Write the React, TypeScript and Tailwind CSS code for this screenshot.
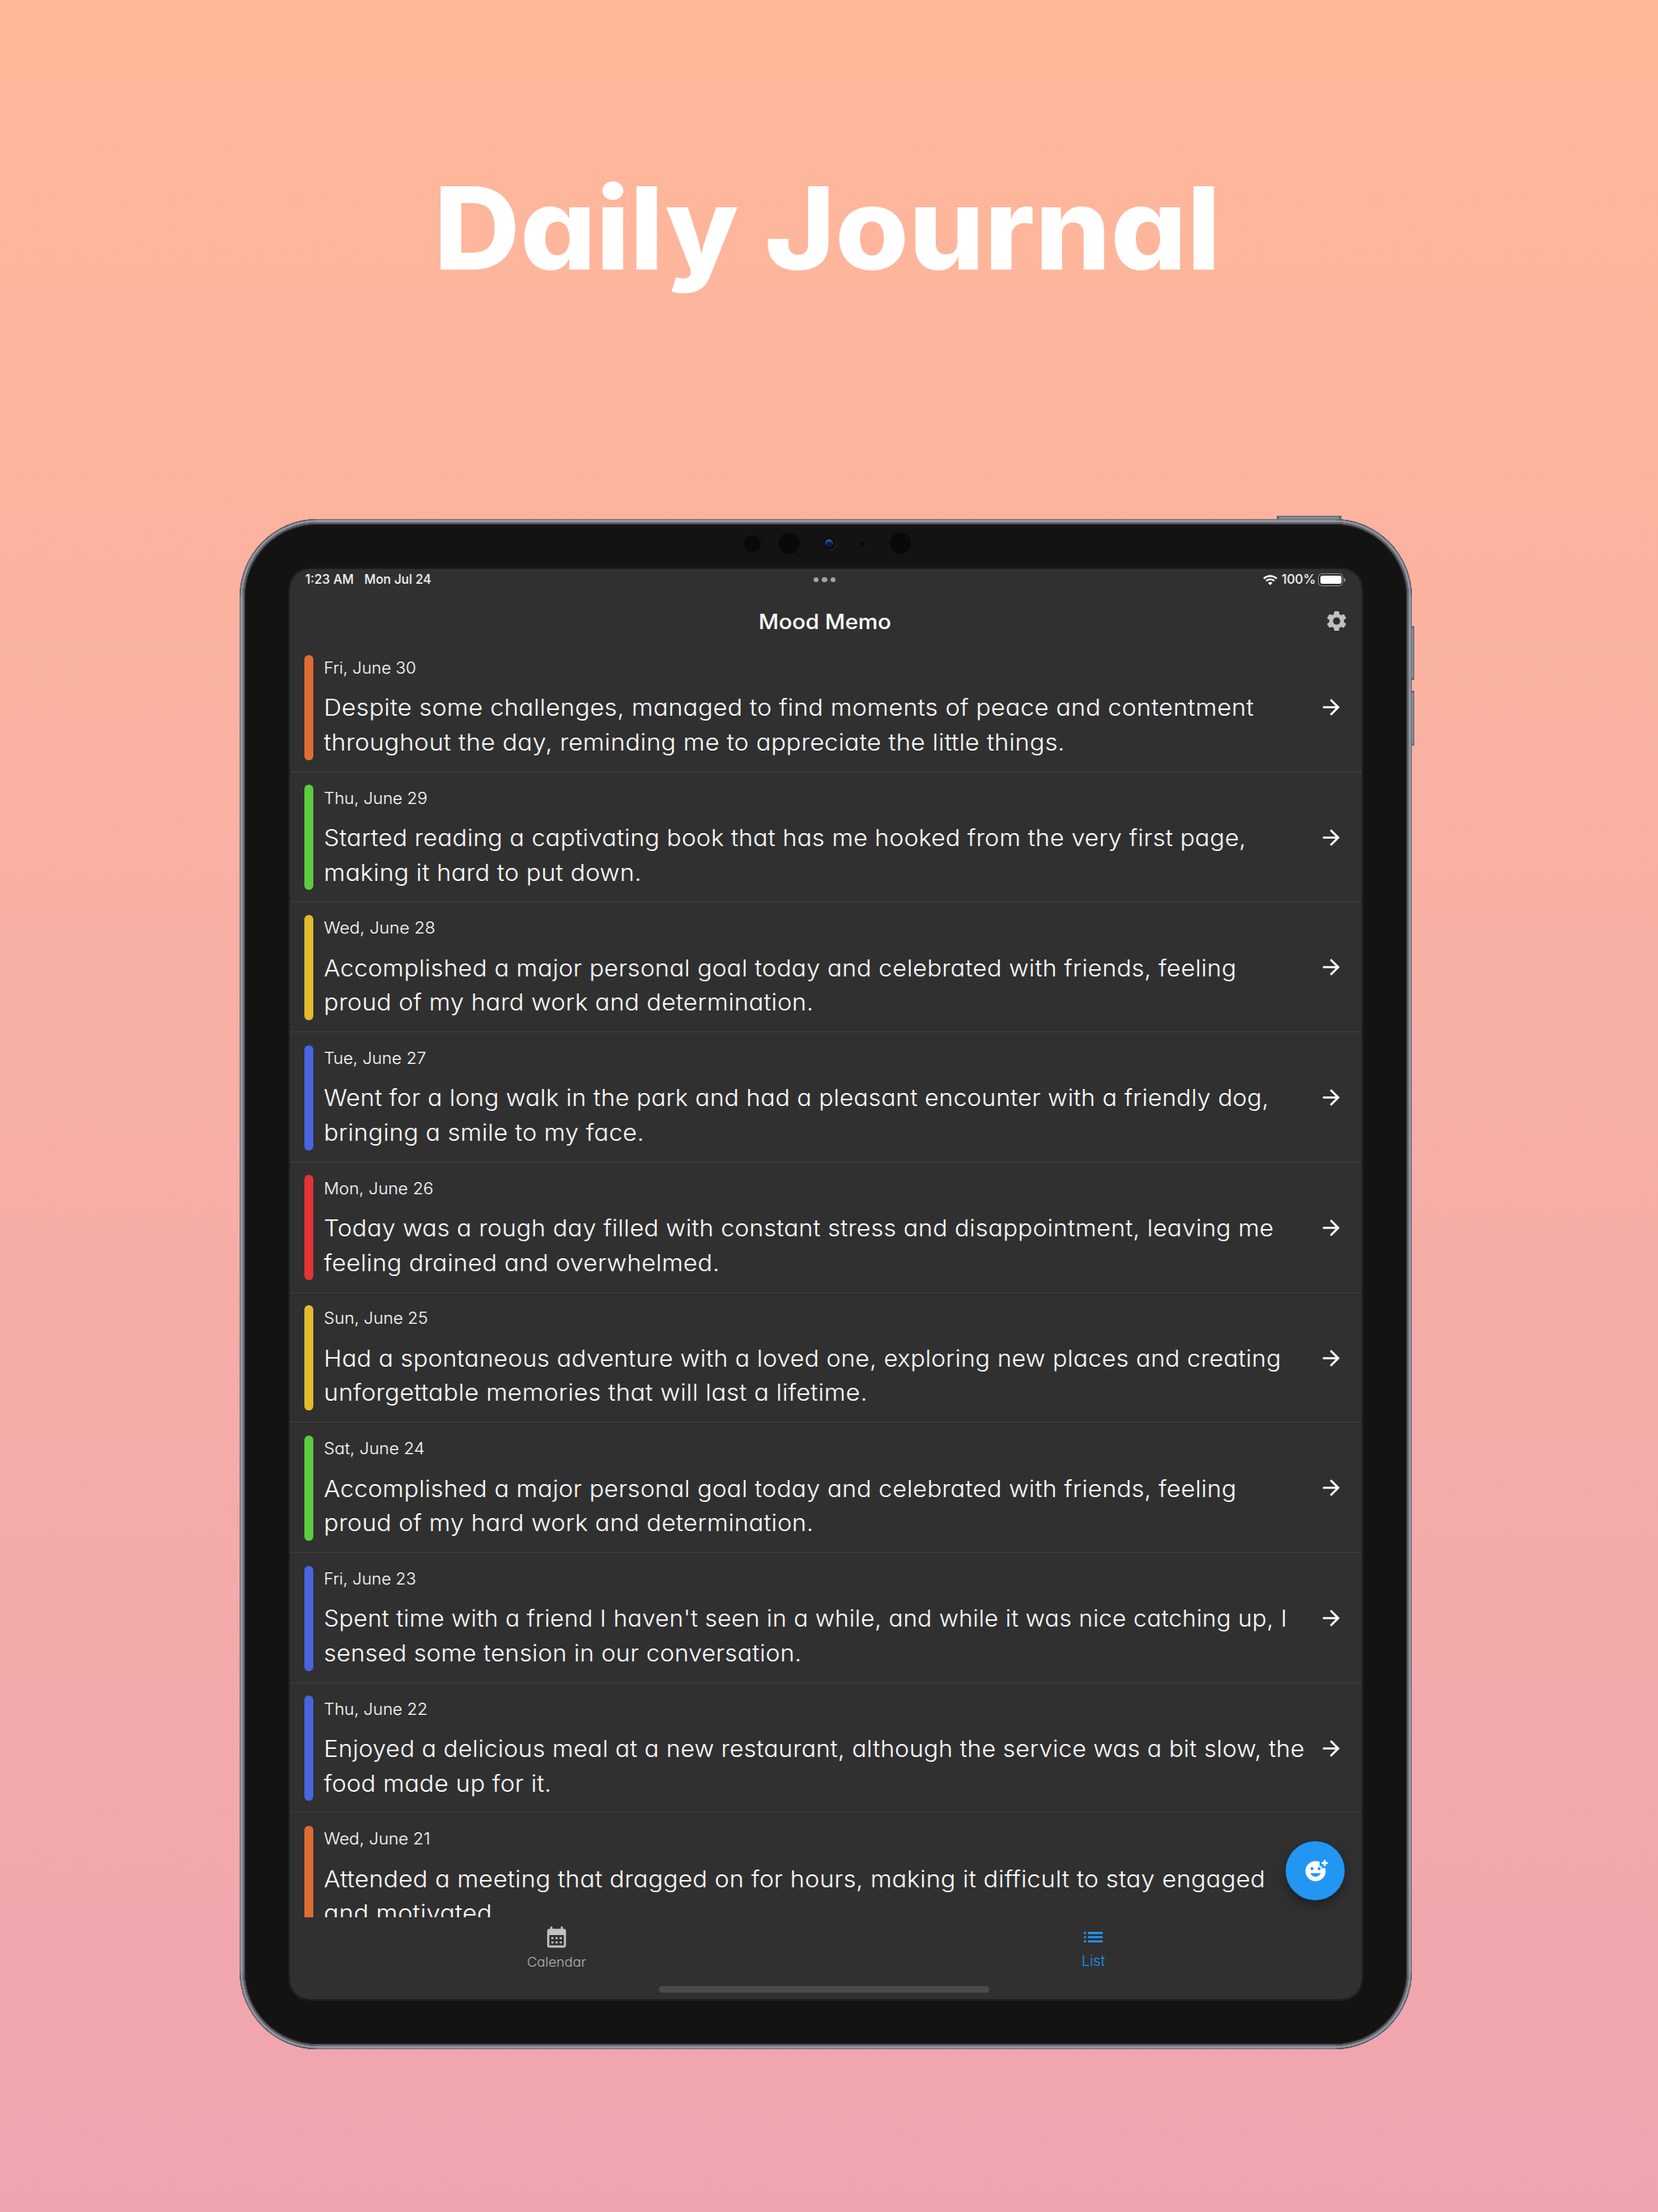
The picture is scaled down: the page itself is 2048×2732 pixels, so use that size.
import { useLayoutEffect, useRef } from "react";
import {
  MdAddReaction,
  MdArrowForward,
  MdCalendarMonth,
  MdList,
  MdSettings,
} from "react-icons/md";

type FitProps = { text: string; width: number; className?: string };

/** One line of text stretched horizontally so that it spans exactly `width` pixels. */
function FitLine({ text, width, className = "" }: FitProps) {
  const ref = useRef<HTMLSpanElement>(null);
  useLayoutEffect(() => {
    const el = ref.current;
    if (!el) return;
    const measure = () => {
      el.style.transform = `scaleX(${width / el.offsetWidth})`;
    };
    measure();
    document.fonts?.ready.then(measure);
  }, [text, width]);
  return (
    <span className={`inline-block whitespace-pre ${className}`} style={{ width }}>
      <span ref={ref} className="inline-block origin-left">
        {text}
      </span>
    </span>
  );
}

type Line = [string, number];
type Entry = { date: Line; color: string; lines: Line[] };

const ORANGE = "bg-[#df6c33]";
const GREEN = "bg-[#5ccb3f]";
const YELLOW = "bg-[#e3bb2f]";
const BLUE = "bg-[#4864e0]";
const RED = "bg-[#e33434]";

const entries: Entry[] = [
  {
    date: ["Fri, June 30", 114],
    color: ORANGE,
    lines: [
      ["Despite some challenges, managed to find moments of peace and contentment", 1149],
      ["throughout the day, reminding me to appreciate the little things.", 915],
    ],
  },
  {
    date: ["Thu, June 29", 128],
    color: GREEN,
    lines: [
      ["Started reading a captivating book that has me hooked from the very first page,", 1139],
      ["making it hard to put down.", 393],
    ],
  },
  {
    date: ["Wed, June 28", 138],
    color: YELLOW,
    lines: [
      ["Accomplished a major personal goal today and celebrated with friends, feeling", 1127],
      ["proud of my hard work and determination.", 605],
    ],
  },
  {
    date: ["Tue, June 27", 126],
    color: BLUE,
    lines: [
      ["Went for a long walk in the park and had a pleasant encounter with a friendly dog,", 1167],
      ["bringing a smile to my face.", 396],
    ],
  },
  {
    date: ["Mon, June 26", 135],
    color: RED,
    lines: [
      ["Today was a rough day filled with constant stress and disappointment, leaving me", 1174],
      ["feeling drained and overwhelmed.", 489],
    ],
  },
  {
    date: ["Sun, June 25", 129],
    color: YELLOW,
    lines: [
      ["Had a spontaneous adventure with a loved one, exploring new places and creating", 1182],
      ["unforgettable memories that will last a lifetime.", 671],
    ],
  },
  {
    date: ["Sat, June 24", 125],
    color: GREEN,
    lines: [
      ["Accomplished a major personal goal today and celebrated with friends, feeling", 1127],
      ["proud of my hard work and determination.", 605],
    ],
  },
  {
    date: ["Fri, June 23", 114],
    color: BLUE,
    lines: [
      ["Spent time with a friend I haven't seen in a while, and while it was nice catching up, I", 1190],
      ["sensed some tension in our conversation.", 590],
    ],
  },
  {
    date: ["Thu, June 22", 128],
    color: BLUE,
    lines: [
      ["Enjoyed a delicious meal at a new restaurant, although the service was a bit slow, the", 1212],
      ["food made up for it.", 281],
    ],
  },
  {
    date: ["Wed, June 21", 131],
    color: ORANGE,
    lines: [
      ["Attended a meeting that dragged on for hours, making it difficult to stay engaged", 1163],
      ["and motivated.", 217],
    ],
  },
];

function Row({ entry }: { entry: Entry }) {
  return (
    <li className="flex h-[160.73px] shrink-0 border-b border-[#3d3d3d] pl-[18px]">
      <span className={`mt-[15.5px] h-[130px] w-[11px] shrink-0 rounded-full ${entry.color}`} />
      <div className="ml-[12.5px] flex w-[1222.5px] shrink-0 flex-col pt-[16.9px] text-white">
        <p className="h-[30px] text-[20px] leading-[30px] font-[350]">
          <FitLine text={entry.date[0]} width={entry.date[1]} />
        </p>
        <div className="mt-[13.3px] text-[28.4px] leading-[42.6px] font-[350] tracking-[0.3px]">
          {entry.lines.map(([text, width]) => (
            <p key={text} className="h-[42.6px]">
              <FitLine text={text} width={width} />
            </p>
          ))}
        </div>
      </div>
      <MdArrowForward className="mt-[65px] ml-[7px] size-[31px] shrink-0 text-white" />
    </li>
  );
}

function StatusBar() {
  return (
    <div className="relative flex h-[26px] shrink-0 items-center pl-[18.5px] text-[15.3px] leading-[26px] font-medium text-[#f4f4f4]">
      <FitLine text="1:23 AM" width={60} />
      <FitLine text="Mon Jul 24" width={83} className="ml-[13.5px]" />
      <div className="absolute top-[9.5px] left-[646.5px] flex gap-[4px]">
        <i className="size-[6.5px] rounded-full bg-[#a3a3a3]" />
        <i className="size-[6.5px] rounded-full bg-[#a3a3a3]" />
        <i className="size-[6.5px] rounded-full bg-[#a3a3a3]" />
      </div>
      <svg viewBox="0 0 18 13" className="ml-auto h-[13px] w-[18px]" fill="none" stroke="white">
        <path d="M1 4.6a11.6 11.6 0 0 1 16 0" strokeWidth="2.2" />
        <path d="M3.9 7.6a7.4 7.4 0 0 1 10.2 0" strokeWidth="2.1" />
        <path d="M9 12.8 6.3 10.1a3.8 3.8 0 0 1 5.4 0Z" fill="white" stroke="none" />
      </svg>
      <FitLine text="100%" width={42} className="ml-[5px]" />
      <div className="ml-[3.5px] flex h-[15.5px] w-[31px] rounded-[4.5px] border border-[#8a8a8a] p-[1.3px]">
        <div className="flex-1 rounded-[2.5px] bg-white" />
      </div>
      <span className="mr-[20px] ml-[1px] h-[5px] w-[1.6px] rounded-r-full bg-[#8a8a8a]" />
    </div>
  );
}

export default function App() {
  return (
    <main
      className="flex h-[2732px] w-[2048px] flex-col overflow-hidden bg-linear-to-b from-[#ffb899] to-[#f0a4b0] font-['Inter',sans-serif] [font-feature-settings:'cv11']"
    >
      <h1 className="h-[641px] shrink-0 pt-[182px] pl-[536px] text-[141px] leading-[200px] font-extrabold text-white">
        <FitLine text="Daily Journal" width={972} />
      </h1>

      <div className="relative ml-[296px] h-[1890px] w-[1448px] shrink-0 rounded-[96px] bg-[#131313]">
        <div className="absolute -top-[4px] left-[1281px] h-[6px] w-[80px] rounded-t-[1px] border border-x-[3px] border-[#63666b] bg-[#868b93]" />
        <div className="absolute top-[132px] left-[1446px] h-[67px] w-[5px] rounded-r-[1px] border border-y-[3px] border-[#6a6d73] bg-[#868b93]" />
        <div className="absolute top-[212px] left-[1446px] h-[68px] w-[5px] rounded-r-[1px] border border-y-[3px] border-[#6a6d73] bg-[#868b93]" />

        <div className="relative h-full w-full rounded-[96px] border border-[#6d7177] bg-[#131313] p-[61px]">
          <div className="pointer-events-none absolute inset-0 rounded-[95px] border-[3px] border-[#9094a0]" />
          <div className="pointer-events-none absolute inset-[3px] rounded-[92px] border-[2px] border-[#63656a]" />
          <div className="pointer-events-none absolute inset-[5px] rounded-[90px] border border-[#36373a]" />

          <div className="pointer-events-none absolute inset-x-0 top-[16px] h-[26px]">
            <i className="absolute top-[3px] left-[622px] size-[21px] rounded-full bg-[#090909]" />
            <i className="absolute top-0 left-[665px] size-[26px] rounded-full bg-[#090909]" />
            <i className="absolute top-[6px] left-[720px] size-[15px] rounded-full bg-[#0b0b0b] shadow-[1px_1px_1px_#262626]" />
            <i className="absolute top-[8px] left-[722px] size-[10px] rounded-full bg-[radial-gradient(circle_at_55%_80%,#0a1a3c_35%,#2c69a8_80%)]" />
            <i className="absolute top-[10.5px] left-[766px] size-[5px] rounded-full bg-[#090909]" />
            <i className="absolute top-0 left-[802px] size-[26px] rounded-full bg-[#090909]" />
          </div>

          <section className="relative flex h-[1766px] w-[1324px] flex-col overflow-hidden rounded-[24px] bg-[#303030] outline-2 outline-[#1b1f1f]">
            <StatusBar />

            <header className="relative flex h-[64px] shrink-0 pt-[6.5px] pl-[578.5px] text-[25.8px] leading-[64px] font-medium text-white">
              <FitLine text="Mood Memo" width={164} />
              <MdSettings className="absolute top-[23px] left-[1277.5px] size-[30px] text-[#c1c1c1]" />
            </header>

            <ul className="flex h-[1575px] shrink-0 flex-col overflow-hidden">
              {entries.map((entry) => (
                <Row key={entry.date[0]} entry={entry} />
              ))}
            </ul>

            <nav className="relative grid flex-1 grid-cols-2">
              <div className="flex flex-col items-center pt-[9px] pr-[3.5px] text-[#b4b4b4]">
                <MdCalendarMonth className="size-[31px] text-[#c1c1c1]" />
                <p className="mt-[3.5px] text-[15.8px] leading-[24px] font-[350]">
                  <FitLine text="Calendar" width={73} />
                </p>
              </div>
              <div className="flex flex-col items-center pt-[9px] pr-[2px] text-[#2196f3]">
                <MdList className="size-[31px]" />
                <p className="mt-[1.5px] text-[17.4px] leading-[24px] font-[350]">
                  <FitLine text="List" width={29} />
                </p>
              </div>
              <div className="absolute bottom-[8px] left-[456px] h-[8px] w-[408px] rounded-full bg-[#4b4b4b]" />
            </nav>

            <button className="absolute top-[1571px] left-[1230px] flex size-[73px] items-center justify-center rounded-full bg-[#2196f3] text-white shadow-[0_6px_14px_rgba(0,0,0,0.35)]">
              <MdAddReaction className="size-[30px]" />
            </button>
          </section>
        </div>
      </div>
    </main>
  );
}
